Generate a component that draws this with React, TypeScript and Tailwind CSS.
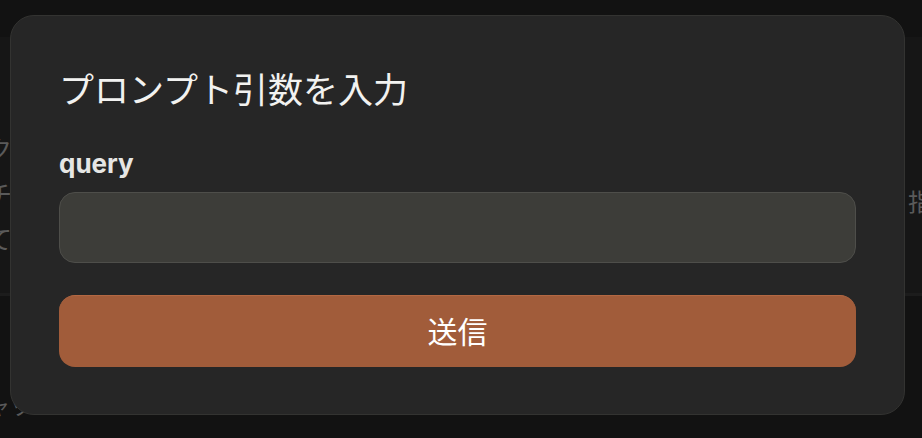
import React from "react";

export default function App() {
  const jp = { fontFamily: '"Noto Sans CJK JP", "Noto Sans", sans-serif' };
  return (
    <div className="relative w-[922px] h-[438px] overflow-hidden bg-[#121212]" style={jp}>
      {/* background page */}
      <div className="flex flex-col h-full">
        <div className="h-[37px]" />
        <div className="h-[256px] bg-[#161616] flex justify-between">
          <div className="flex flex-col pt-[98px] gap-[18px] -ml-[13px] text-[25px] leading-[27px] text-[#5a5a5a]">
            <span>クリックして</span>
            <span>チャット</span>
            <span>てください</span>
          </div>
          <div className="flex flex-col pt-[150px] pr-0 text-[24px] leading-[28px] text-[#5a5a5a] w-[14px] overflow-hidden">
            <span className="whitespace-nowrap">指定</span>
          </div>
        </div>
        <div className="h-[3px] bg-[#1c1c1c]" />
        <div className="flex-1 bg-[#121212] pt-[96px] -ml-[12px] text-[22px] leading-[24px] text-[#5a5a5a]">
          <span>ャット</span>
        </div>
      </div>

      {/* modal */}
      <div className="absolute left-[10px] top-[15px] w-[895px] rounded-[24px] border border-[#333331] bg-[#262626] px-12 pt-12 pb-[47px] flex flex-col">
        <h2 className="text-[35px] leading-[48px] font-normal text-[#f2f2f0]" style={jp}>
          プロンプト引数を入力
        </h2>
        <label
          className="mt-[36px] text-[26px] leading-[32px] font-bold text-[#e6e6e4]"
          style={{ fontFamily: 'Inter, "Noto Sans", sans-serif' }}
        >
          query
        </label>
        <input
          className="mt-3 h-[71px] w-full rounded-[16px] border border-[#4e4e4a] bg-[#3d3d39] outline-none"
          type="text"
        />
        <button
          className="mt-[32px] h-[72px] w-full rounded-[16px] border-t border-[#b36843] bg-[#a15c3a] pb-[4px] text-[30px] leading-[40px] text-white"
          style={jp}
        >
          送信
        </button>
      </div>
    </div>
  );
}
